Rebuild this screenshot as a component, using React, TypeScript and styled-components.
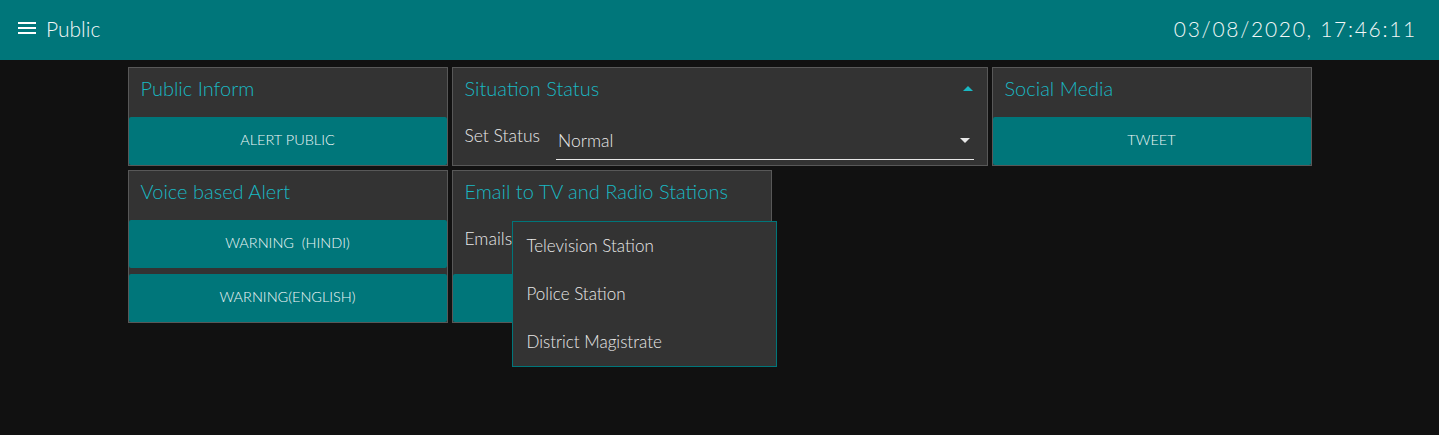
import React from 'react';
import styled, { createGlobalStyle } from 'styled-components';

const GlobalStyle = createGlobalStyle`
  html, body {
    margin: 0;
    padding: 0;
    background: #111111;
    font-family: Lato, 'Open Sans', sans-serif;
  }
  body, #root {
    min-height: 100vh;
  }
`;

const TEAL = '#00767a';
const TITLE = '#19b8c3';

const Header = styled.header`
  height: 60px;
  background: ${TEAL};
  display: flex;
  align-items: center;
  justify-content: space-between;
  padding: 0 22px 0 15px;
  color: #f2f7f7;
  font-weight: 300;
`;

const Brand = styled.div`
  display: flex;
  align-items: center;
  gap: 7px;
  font-size: 21px;
  margin-top: -4px;
`;

const Clock = styled.div`
  font-size: 21px;
  letter-spacing: 1.7px;
  margin-top: -4px;
`;

const Grid = styled.main`
  width: 1184px;
  margin: 7px auto 0;
  display: flex;
  flex-wrap: wrap;
  gap: 4px;
  align-items: flex-start;
`;

const Card = styled.section<{ $w: number }>`
  position: relative;
  width: ${p => p.$w}px;
  box-sizing: border-box;
  background: #333333;
  border: 1px solid #585858;
  display: flex;
  flex-direction: column;
`;

const CardTitle = styled.div`
  height: 49px;
  box-sizing: border-box;
  display: flex;
  align-items: flex-start;
  justify-content: space-between;
  padding: 8px 14px 0 12px;
  line-height: 24px;
  color: ${TITLE};
  font-size: 20px;
  font-weight: 300;
`;

const CaretSlot = styled.span`
  display: flex;
  height: 24px;
  align-items: center;
`;

const ActionButton = styled.button<{ $gap?: boolean }>`
  height: 48px;
  border: none;
  border-radius: 2px;
  background: ${TEAL};
  color: #f0f7f7;
  font-family: inherit;
  font-size: 14.5px;
  font-weight: 300;
  text-transform: uppercase;
  margin-top: ${p => (p.$gap ? 6 : 0)}px;
  padding: 0 0 4px;
`;

const FieldRow = styled.div<{ $h: number }>`
  height: ${p => p.$h}px;
  box-sizing: border-box;
  display: flex;
  align-items: flex-start;
  gap: 16px;
  padding: 7px 13px 0 12px;
  color: #e8e8e8;
  font-size: 17.5px;
  line-height: 24px;
  font-weight: 300;
`;

const Select = styled.div`
  flex: 1;
  height: 36px;
  box-sizing: border-box;
  display: flex;
  align-items: center;
  justify-content: space-between;
  padding: 0 4px 2px 2px;
  border-bottom: 1.5px solid #e8e8e8;
  color: #e8e8e8;
`;

const Menu = styled.ul`
  position: absolute;
  left: 59px;
  top: 50px;
  width: 265px;
  margin: 0;
  padding: 0;
  list-style: none;
  box-sizing: border-box;
  background: #333333;
  border: 1px solid ${TEAL};
  z-index: 2;
`;

const MenuItem = styled.li`
  height: 48px;
  display: flex;
  align-items: center;
  padding: 0 0 2px 14px;
  box-sizing: border-box;
  color: #e8e8e8;
  font-size: 17px;
  font-weight: 300;
`;

const Caret = ({ up, color }: { up?: boolean; color: string }) => (
  <svg width="10" height="5" viewBox="0 0 10 5">
    <path d={up ? 'M0 5 L5 0 L10 5 Z' : 'M0 0 L5 5 L10 0 Z'} fill={color} />
  </svg>
);

const MenuIcon = () => (
  <svg width="24" height="24" viewBox="0 0 24 24" fill="#ffffff">
    <path d="M3 6h18v2H3zM3 11h18v2H3zM3 16h18v2H3z" />
  </svg>
);

export default function App() {
  return (
    <>
      <GlobalStyle />
      <Header>
        <Brand>
          <MenuIcon />
          Public
        </Brand>
        <Clock>03/08/2020, 17:46:11</Clock>
      </Header>
      <Grid>
        <Card $w={320}>
          <CardTitle>Public Inform</CardTitle>
          <ActionButton>Alert Public</ActionButton>
        </Card>
        <Card $w={536}>
          <CardTitle>
            Situation Status
            <CaretSlot>
              <Caret up color={TITLE} />
            </CaretSlot>
          </CardTitle>
          <FieldRow $h={48}>
            <span>Set Status</span>
            <Select>
              Normal
              <Caret color="#e8e8e8" />
            </Select>
          </FieldRow>
        </Card>
        <Card $w={320}>
          <CardTitle>Social Media</CardTitle>
          <ActionButton>Tweet</ActionButton>
        </Card>
        <Card $w={320}>
          <CardTitle>Voice based Alert</CardTitle>
          <ActionButton>Warning&nbsp;&nbsp;(Hindi)</ActionButton>
          <ActionButton $gap>Warning(English)</ActionButton>
        </Card>
        <Card $w={320}>
          <CardTitle>Email to TV and Radio Stations</CardTitle>
          <FieldRow $h={54}>
            <span>Emails</span>
          </FieldRow>
          <ActionButton aria-label="Send email" />
          <Menu>
            <MenuItem>Television Station</MenuItem>
            <MenuItem>Police Station</MenuItem>
            <MenuItem>District Magistrate</MenuItem>
          </Menu>
        </Card>
      </Grid>
    </>
  );
}
